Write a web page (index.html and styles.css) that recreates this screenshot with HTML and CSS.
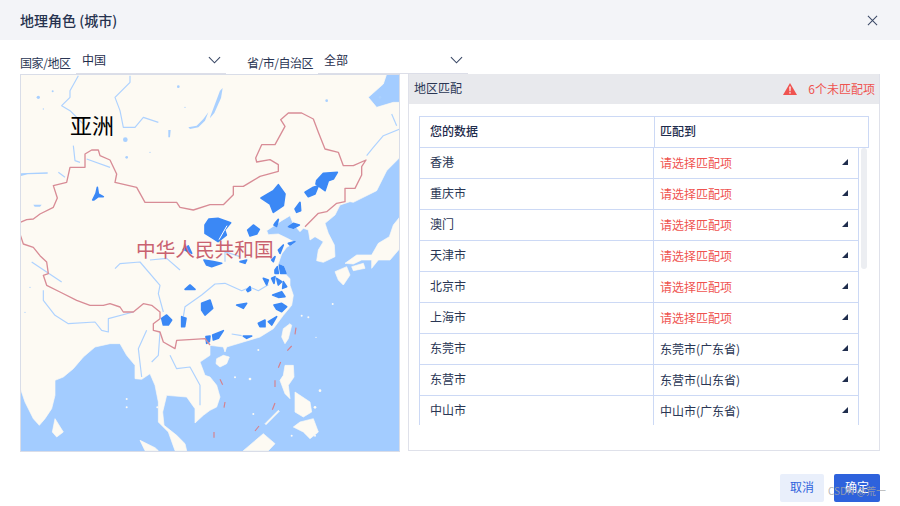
FILE: index.html
```html
<!DOCTYPE html>
<html lang="zh">
<head>
<meta charset="utf-8">
<title>地理角色 (城市)</title>
<link rel="stylesheet" href="styles.css">
</head>
<body>
<div class="dialog">
  <header class="dialog-head">
    <h1 class="dialog-title">地理角色 (城市)</h1>
    <svg class="close" viewBox="0 0 12 12"><path d="M1 1l10 10M11 1L1 11"/></svg>
  </header>
  <div class="filters">
    <div class="filter filter-a">
      <span class="filter-label label-a">国家/地区</span>
      <div class="select"><span>中国</span><svg class="chev" viewBox="0 0 14 8"><path d="M1 1l6 6 6-6"/></svg></div>
    </div>
    <div class="filter">
      <span class="filter-label label-b">省/市/自治区</span>
      <div class="select"><span>全部</span><svg class="chev" viewBox="0 0 14 8"><path d="M1 1l6 6 6-6"/></svg></div>
    </div>
  </div>
  <main class="content">
    <div class="map">
      <svg class="map-svg" viewBox="3 3 1134 1128">
        <g class="land">
          <path d="M0 0L1100 0 1090 30 1045 70 1070 100 1120 85 1140 85 1140 250 1100 290 1070 350 1000 385 990 383 960 393 945 423 915 448 925 478 943 513 945 548 910 565 890 560 895 528 910 503 885 488 870 498 865 468 850 463 840 473 820 450 810 425 785 440 740 470 745 482 775 480 800 492 825 505 800 520 785 540 775 569 785 589 810 614 810 634 820 664 815 694 790 724 760 764 720 789 670 804 620 819 615 834 610 819 570 814 570 844 540 864 555 904 570 909 590 934 600 969 590 999 570 1009 550 1024 525 1047 525 1004 500 969 440 964 428 1014 432 1054 470 1084 495 1109 500 1130 465 1130 445 1074 415 1044 415 984 405 934 390 899 365 916 345 914 345 874 320 844 300 809 270 809 225 819 190 849 160 884 130 909 105 919 105 964 95 1004 75 1034 58 1054 40 1034 15 984 3 949 0 949Z"/>
          <path d="M590 854l20-10 18 5-8 20-20 10-12-10z"/>
          <path d="M810 749l5 5-10 40-10 15-10-20 5-25z"/>
          <path d="M795 874h25l2 35-17 25 5 40-15-15-15-40 10-15z"/>
          <path d="M840 1044l40-10 15 40-25 20-20-20-30-15z"/>
          <path d="M825 954l45 30 5 30-25 15-25-15z"/>
          <path d="M670 1130l60-51 35 30-20 21z"/>
          <path d="M735 1049l40-40 3 3-40 40z"/>
          <path d="M360 1099l45 22 10 9h-40z"/>
          <path d="M105 1034l25 40-20 15-13-15z"/>
          <path d="M1140 428L1120 453 1108 488 1075 508 1055 543 1010 543 975 568 1000 570 1025 558 1055 558 1055 583 1075 558 1110 558 1140 523z"/>
          <path d="M995 578l35-10 5 15-35 7z"/>
          <path d="M945 593l35-15 10 25-20 30-15-15z"/>
          <circle cx="715" cy="828" r="3"/><circle cx="690" cy="915" r="4"/><circle cx="645" cy="910" r="3"/>
          <circle cx="900" cy="950" r="4"/><circle cx="885" cy="1000" r="4"/><circle cx="700" cy="1020" r="3"/>
          <circle cx="845" cy="725" r="3"/><circle cx="865" cy="730" r="3"/><circle cx="938" cy="690" r="3"/>
          <circle cx="885" cy="1085" r="3"/><circle cx="815" cy="1085" r="3"/>
          <circle cx="888" cy="790" r="2"/><circle cx="320" cy="1000" r="3"/><circle cx="320" cy="975" r="3"/><circle cx="412" cy="1000" r="3"/>
        </g>
        <g class="lake">
          <path d="M3 298l80-3v4l-60 2-20 5z"/>
          <path d="M40 392h25l-5 6H44z"/>
          <path d="M445 168h7l-2 22h-5z"/>
          <path d="M505 160l25-5 20-20 15-20-10 25-20 20-25 5z"/>
          <path d="M570 130l30-80 8-8-5 30-20 45-13 15z"/>
          <circle cx="316" cy="197" r="7"/>
          <circle cx="55" cy="70" r="5"/><circle cx="98" cy="52" r="3"/><circle cx="475" cy="38" r="4"/>
          <circle cx="920" cy="80" r="4"/><circle cx="1080" cy="70" r="4"/>
          <circle cx="320" cy="250" r="4"/><circle cx="390" cy="235" r="2"/><circle cx="495" cy="100" r="2"/>
          <circle cx="70" cy="105" r="2"/><circle cx="30" cy="640" r="2"/><circle cx="15" cy="715" r="2"/>
        </g>
        <g class="river">
          <path d="M175 5l-25 45v20l-25 25 25 15 40 40"/>
          <path d="M330 5v20l-45 45 15 40 10 50h35l25-30 45 15"/>
          <path d="M200 255l70 25"/><path d="M160 215l5 45 15 5"/><path d="M115 295l20 15"/>
          <path d="M1140 165l-50 20-30 35-20 25"/><path d="M1115 120l15 35"/>
          <path d="M35 564l90 60"/>
          <path d="M285 584l15-15 60-5 60 70-5 25 15 55"/>
          <path d="M70 649v30l35 45 40 25 80-5 20 25 20 5v-40l75-20"/>
          <path d="M380 769l-25 55 10 85"/><path d="M420 774l-5 70-20 20"/>
          <path d="M450 844l20 40 40-5 30 55v60"/>
          <path d="M490 728l5-30 50-35 40-33 30-2 50 22 25-10 25 10 30-18"/>
          <path d="M390 558l50-5 40 35"/>
          <path d="M615 563v-30l45 15"/>
          <path d="M635 780l30 5"/>
        </g>
        <g class="region">
          <path d="M555 453l12-18 27-2 38 13-18 22 5 15-25 20-15-10-24-15z"/>
          <path d="M683 468l17-15 18 13-8 14-20 6z"/>
          <path d="M765 448l10-12-5 22-8-5z"/>
          <path d="M805 458l15-10 18 5-18 10z"/>
          <path d="M552 558l28 5 25 5-30 10-15-5z"/>
          <path d="M660 563l20-5-5 10z"/>
          <path d="M495 646l15-13 15 13z"/>
          <path d="M485 728l13 5-4 25h-9z"/>
          <path d="M425 733l15-10 15 15-10 15h-15z"/>
          <path d="M545 688l25-10 8 25-23 20-10-15z"/>
          <path d="M650 693l30-5-10 15z"/>
          <path d="M715 748l20-10v20l-15 0z"/>
          <path d="M745 743l25-15-15 25z"/>
          <path d="M758 663l27-10 10 15-20 2z"/>
          <path d="M762 693l23-5 15 10-15 15-15-7z"/>
          <path d="M730 613l15 5-5 15z"/>
          <path d="M778 573l12 5 8 20-16 0z"/>
          <path d="M680 648l10-10 2 10-8 5z"/>
          <path d="M558 788l12-2-2 17-8 5z"/>
          <path d="M578 783l32-13-15 23-15 5z"/>
          <path d="M670 786h25l-15 7z"/>
          <path d="M775 528l15-15-10 25z"/>
          <path d="M805 508l20-5-15 10z"/>
          <path d="M755 558l10-10-5 15z"/>
          <path d="M765 588l7-10 3 20-10 0z"/>
          <path d="M755 613l10-5-3 20z"/>
          <path d="M770 613l15 10-10 10z"/>
          <path d="M790 623l10 15-12 5z"/>
          <path d="M490 526l15-10 10 22z"/>
          <path d="M890 320l20-22 42-3-12 20-15 5-10 30-27-20z"/>
          <path d="M855 355l25-15 15-5-10 25-20 8z"/>
          <path d="M723 372l37-22 15-18 20 28-5 35-30 20-10-25z"/>
          <path d="M825 405l15-20 2 25-12 5z"/>
          <path d="M218 378l10-20 4-18 3 20 15 8-15 0-14 10z"/>
        </g>
        <path class="crack" d="M597 497l24-42"/>
        <g class="border">
          <path d="M0 445l20-8 20-2 20-15 40-20 12-28-12-37 40-10 10-45h45v-40l20-12h20l5 17 30 13 20 42-5 25 65 15 25 45h95l10 15 40 8 50-16h40l30-30v-25h30l25-15 25-15 55-15v-20l-25-15-40 7-3-12 18-40h40l30-55-13-20 23-20h40l35 18 15 40 20 50 40 10 15 40h30l38-17-13 20v25l-20 40h-30v40l-25 5-30 25-25 5-40 40"/>
          <path d="M0 480l10 30 30 10 20 25 20 19 5 35-15 5 10 30 40 20 50 25 40 15h40l20-5 30 10 10 15h30l30-25 25 5 25 20v20l-20 15v20l20 5 10 30 35 20 5-25 50-3 35-2 15 19"/>
          <path class="dash" d="M828 761l-3 20M815 816l-13 14M782 864l-7 17M765 919v20M765 987l-8 20M717 1056l-12 15M615 984l-3 17M600 916l8 16M582 1074v17"/>
        </g>
        <text class="name-asia" x="150" y="180">亚洲</text>
        <text class="name-cn" x="348" y="548">中华人民共和国</text>
      </svg>
    </div>
    <section class="panel">
      <div class="panel-head">
        <span class="panel-title">地区匹配</span>
        <div class="warn">
          <svg class="warn-icon" viewBox="0 0 14 12"><path d="M7 0l7 12H0z"/><path class="warn-mark" d="M6.3 3.6h1.4l-.2 4.6h-1zM6.3 9.2h1.4v1.3H6.3z"/></svg>
          <span>6个未匹配项</span>
        </div>
      </div>
      <div class="panel-body">
        <div class="table-head">
          <div class="th th-a">您的数据</div>
          <div class="th">匹配到</div>
        </div>
        <div class="table-wrap">
          <div class="rows">
            <div class="row"><div class="c1">香港</div><div class="c2 todo">请选择匹配项<i class="tri"></i></div></div>
            <div class="row"><div class="c1">重庆市</div><div class="c2 todo">请选择匹配项<i class="tri"></i></div></div>
            <div class="row"><div class="c1">澳门</div><div class="c2 todo">请选择匹配项<i class="tri"></i></div></div>
            <div class="row"><div class="c1">天津市</div><div class="c2 todo">请选择匹配项<i class="tri"></i></div></div>
            <div class="row"><div class="c1">北京市</div><div class="c2 todo">请选择匹配项<i class="tri"></i></div></div>
            <div class="row"><div class="c1">上海市</div><div class="c2 todo">请选择匹配项<i class="tri"></i></div></div>
            <div class="row"><div class="c1">东莞市</div><div class="c2">东莞市(广东省)<i class="tri"></i></div></div>
            <div class="row"><div class="c1">东营市</div><div class="c2">东营市(山东省)<i class="tri"></i></div></div>
            <div class="row"><div class="c1">中山市</div><div class="c2">中山市(广东省)<i class="tri"></i></div></div>
          </div>
          <div class="scroll"></div>
        </div>
      </div>
    </section>
  </main>
  <footer class="actions">
    <button class="btn btn-ghost">取消</button>
    <button class="btn btn-main">确定</button>
    <span class="watermark">CSDN @荒一</span>
  </footer>
</div>
</body>
</html>
```

FILE: styles.css
```css
* { box-sizing: border-box; }
html, body { margin: 0; padding: 0; background: #fff; }
body { font-family: "Noto Sans CJK SC", "Liberation Sans", sans-serif; font-size: 12px; color: #1f2d4d; }
.dialog { width: 900px; height: 506px; overflow: hidden; position: relative; }
.dialog-head { height: 40px; background: #f3f4f8; display: flex; align-items: center; justify-content: space-between; padding: 0 22px 0 20px; }
.dialog-title { margin: 0; font-size: 14px; font-weight: 500; color: #26324f; line-height: 20px; }
.close { width: 11px; height: 11px; fill: none; stroke: #3a4866; stroke-width: 1.1; }
.filters { height: 34px; display: flex; padding-left: 20px; }
.filter { display: flex; align-items: flex-end; height: 34px; }
.filter-a { margin-right: 21px; }
.filter-label { font-size: 12px; line-height: 18px; margin-right: 5px; padding-bottom: 2px; color: #2a3654; white-space: nowrap; }
.label-a { width: 51px; letter-spacing: -.4px; }
.label-b { width: 66px; letter-spacing: -.5px; }
.select { width: 150px; height: 33px; border-bottom: 1px solid #dcdee8; display: flex; align-items: center; justify-content: space-between; padding: 14px 5px 8px 6px; color: #1f2d4d; }
.select span { line-height: 18px; }
.chev { width: 13px; height: 8px; fill: none; stroke: #3a4866; stroke-width: 1.2; }
.content { display: flex; gap: 8px; padding: 0 20px; height: 378px; }
.map { width: 380px; height: 378px; border: 1px solid #d9dde8; flex: none; background: #a3ccff; }
.map-svg { display: block; width: 378px; height: 376px; }
.land path { fill: #fdfaf3; stroke: #fdfaf3; stroke-width: 2; stroke-linejoin: round; }
.land circle { fill: #fdfaf3; }
.lake { fill: #a9d0ff; }
.river path { fill: none; stroke: #aed2ff; stroke-width: 3.5; stroke-linejoin: round; }
.region { filter: drop-shadow(0 0 1px #fff); }
.region path { fill: #3b88f5; stroke: #3b88f5; stroke-width: 5; stroke-linejoin: round; }
.crack { fill: none; stroke: #fff; stroke-width: 3; }
.border path { fill: none; stroke: #d88c96; stroke-width: 4; stroke-linejoin: round; }
.border .dash { stroke: #d6808c; stroke-width: 3.5; }
.name-asia { font-size: 66px; fill: #000; }
.name-cn { font-size: 59px; fill: #c9616f; }
.panel { flex: 1; height: 377px; border: 1px solid #dfe1ea; border-top: 0; display: flex; flex-direction: column; }
.panel-head { height: 30px; background: #e8e9ed; display: flex; align-items: center; justify-content: space-between; padding: 0 4px 0 5px; flex: none; color: #2a3654; }
.panel-title { padding-bottom: 3px; }
.warn { display: flex; align-items: center; color: #ef5350; padding-bottom: 1px; }
.warn-icon { width: 14px; height: 12px; margin-right: 11px; }
.warn-icon path { fill: #ef5350; }
.warn-icon .warn-mark { fill: #fff; }
.panel-body { padding: 12px 10px 0; }
.table-head { height: 32px; display: flex; border: 1px solid #ccd9f5; }
.th { font-weight: 500; line-height: 28px; padding-left: 5px; flex: 1; color: #1f2d4d; }
.th-a { flex: none; width: 235px; padding-left: 10px; border-right: 1px solid #ccd9f5; }
.table-wrap { display: flex; height: 277px; overflow: hidden; }
.rows { width: 440px; flex: none; border-left: 1px solid #ccd9f5; border-right: 1px solid #ccd9f5; }
.row { height: 31px; display: flex; border-bottom: 1px solid #ccd9f5; align-items: stretch; color: #2a3654; }
.c1 { width: 234px; flex: none; border-right: 1px solid #ccd9f5; padding-left: 10px; line-height: 28px; }
.c2 { flex: 1; padding: 0 10px 0 6px; line-height: 30px; display: flex; align-items: center; justify-content: space-between; }
.todo { color: #ef5350; }
.tri { width: 6px; height: 6px; background: #1f2d4d; clip-path: polygon(100% 0, 100% 100%, 0 100%); margin-bottom: 2px; }
.scroll { width: 6px; height: 121px; margin-left: 2px; background: #eceef2; border-radius: 3px; }
.actions { display: flex; justify-content: flex-end; gap: 10px; padding: 22px 20px 0 0; position: relative; }
.btn { height: 28px; border: 0; border-radius: 2px; font: inherit; font-size: 12px; padding: 0 0 3px; }
.btn-ghost { width: 44px; background: #e9effb; color: #2f63dc; }
.btn-main { width: 46px; background: #2e62dc; color: #fff; }
.watermark { position: absolute; left: 828px; top: 32px; font-size: 10px; line-height: 14px; color: rgba(165,165,165,.85); white-space: nowrap; }
```
